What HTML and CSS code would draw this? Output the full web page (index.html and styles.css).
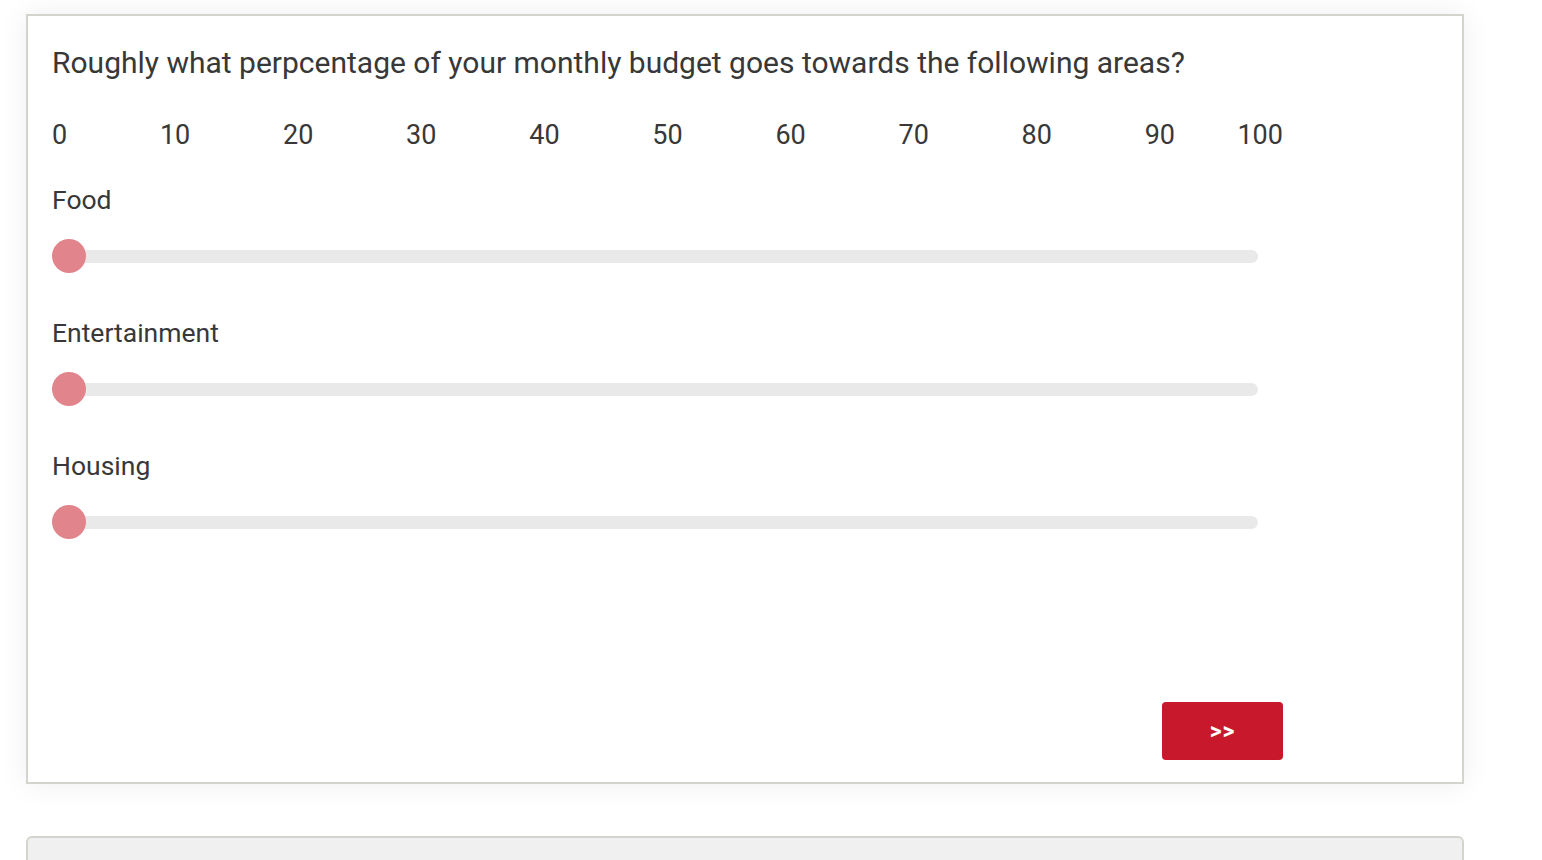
FILE: index.html
```html
<!DOCTYPE html>
<html lang="en">
<head>
<meta charset="utf-8">
<title>Budget survey</title>
<link rel="stylesheet" href="styles.css">
</head>
<body>
<main class="page">
  <section class="card">
    <h1 class="question">Roughly what perpcentage of your monthly budget goes towards the following areas?</h1>
    <div class="scale">
      <span class="tick">0</span>
      <span class="tick">10</span>
      <span class="tick">20</span>
      <span class="tick">30</span>
      <span class="tick">40</span>
      <span class="tick">50</span>
      <span class="tick">60</span>
      <span class="tick">70</span>
      <span class="tick">80</span>
      <span class="tick">90</span>
      <span class="tick">100</span>
    </div>
    <div class="group">
      <div class="label">Food</div>
      <div class="slider"><div class="track"></div><div class="thumb"></div></div>
    </div>
    <div class="group">
      <div class="label">Entertainment</div>
      <div class="slider"><div class="track"></div><div class="thumb"></div></div>
    </div>
    <div class="group">
      <div class="label">Housing</div>
      <div class="slider"><div class="track"></div><div class="thumb"></div></div>
    </div>
    <div class="footer">
      <button class="next" type="button">&gt;&gt;</button>
    </div>
  </section>
  <section class="card card-next"></section>
</main>
</body>
</html>
```

FILE: styles.css
```css
* { box-sizing: border-box; }

html, body {
  margin: 0;
  padding: 0;
  background: #ffffff;
}

body {
  font-family: Roboto, "Liberation Sans", Arial, sans-serif;
  color: #383838;
  overflow: hidden;
  height: 860px;
}

.page {
  padding: 14px 0 0 26px;
  display: flex;
  flex-direction: column;
  gap: 52px;
}

.card {
  width: 1438px;
  min-height: 770px;
  background: #ffffff;
  border: 2px solid #d4d4cf;
  box-shadow: 0 0 28px rgba(0, 0, 0, 0.07);
  padding: 29px 24px 22px 24px;
  display: flex;
  flex-direction: column;
}

.card-next {
  min-height: 60px;
  background: #f0f0f0;
  border-radius: 6px;
  box-shadow: none;
}

.question {
  margin: 0;
  font-size: 30px;
  font-weight: 400;
  line-height: 35px;
}

.scale {
  margin-top: 39px;
  width: 1231px;
  display: flex;
  justify-content: space-between;
  font-size: 27px;
  line-height: 32px;
}

.tick {
  width: 0;
  display: flex;
  justify-content: center;
  white-space: nowrap;
}

.tick:first-child { justify-content: flex-start; }
.tick:last-child { justify-content: flex-end; }

.group {
  display: flex;
  flex-direction: column;
  gap: 24px;
  margin-top: 33px;
}

.group + .group { margin-top: 44px; }

.label {
  font-size: 26.5px;
  line-height: 31px;
}

.slider {
  width: 1206px;
  height: 34px;
  display: grid;
  align-items: center;
}

.track, .thumb { grid-area: 1 / 1; }

.track {
  height: 13px;
  border-radius: 7px;
  background: #e9e9e9;
}

.thumb {
  width: 34px;
  height: 34px;
  border-radius: 50%;
  background: #e2848c;
}

.footer {
  margin-top: auto;
  width: 1231px;
  display: flex;
  justify-content: flex-end;
}

.next {
  width: 121px;
  height: 58px;
  border: none;
  border-radius: 4px;
  background: #c8182c;
  color: #ffffff;
  font-family: Roboto, "Liberation Sans", Arial, sans-serif;
  font-weight: 700;
  font-size: 23px;
  letter-spacing: 1px;
  padding: 0;
  cursor: pointer;
}
```
